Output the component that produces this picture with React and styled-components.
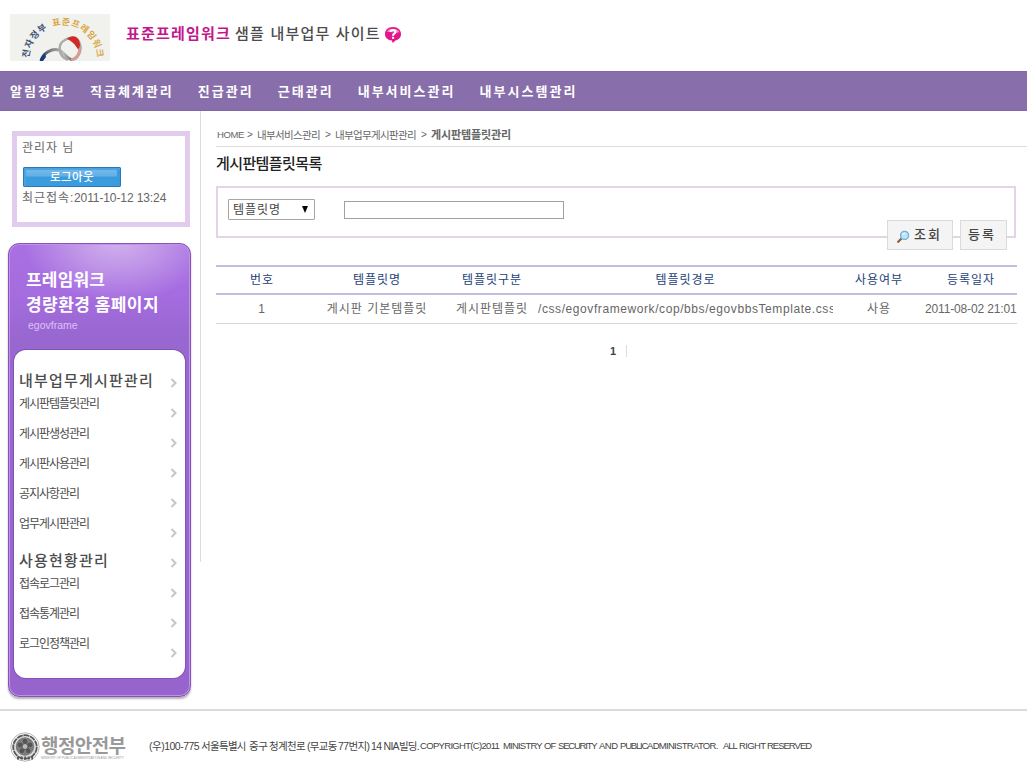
import React from "react";
import styled, { createGlobalStyle } from "styled-components";

const Global = createGlobalStyle`
  * { box-sizing: border-box; }
  body {
    margin: 0;
    background: #fff;
    color: #666;
    font: 12px/16px "Liberation Sans", "Noto Sans CJK KR", sans-serif;
    overflow: hidden;
  }
  ul { list-style: none; margin: 0; padding: 0; }
  h1, h2, p { margin: 0; font-weight: normal; }
`;

const Page = styled.div`
  width: 1027px;
  height: 777px;
  white-space: nowrap;
`;

/* Text with its own tracking */
const Txt = styled.span`
  display: inline-block;
  font-size: ${(p) => p.$size || 12}px;
  letter-spacing: ${(p) => p.$ls || 0}px;
  font-weight: ${(p) => p.$weight || 400};
  width: ${(p) => (p.$w ? p.$w + "px" : "auto")};
  color: ${(p) => p.$color || "inherit"};
`;

const Header = styled.header`
  height: 71px;
  display: flex;
  align-items: flex-start;
  padding: 14px 10px 0;
`;
const SiteTitle = styled.h1`
  display: flex;
  align-items: center;
  height: 20px;
  margin: 10px 0 0 16px;
  font-size: 15px;
  font-weight: 500;
  letter-spacing: 1.2px;
  color: #4c4c4c;
`;
const Brand = styled.span`
  color: #c4168c;
  font-weight: 700;
  margin-right: 4px;
`;

const Nav = styled.nav`
  height: 40px;
  background: #886eaa;
  border-top: 1px solid #8266a8;
  border-bottom: 1px solid #8266a8;
  display: flex;
  align-items: center;
  gap: 24px;
  padding: 1px 0 0 10px;
`;
const NavItem = styled.a`
  color: #fff;
  font-size: 13px;
  font-weight: 700;
  letter-spacing: 2.02px;
`;

const Body = styled.div`
  display: flex;
  height: 598px;
`;
const Side = styled.aside`
  width: 200px;
  padding: 20px 0 0 8px;
`;
const Divider = styled.div`
  width: 1px;
  height: 451px;
  background: #dcdcdc;
`;
const LoginBox = styled.section`
  width: 178px;
  height: 96px;
  margin-left: 4px;
  padding: 3px 0 0 5px;
  border: 5px solid #e2ccee;
`;
const Row = styled.p`
  height: 18px;
  line-height: 18px;
  display: flex;
`;
const Logout = styled.button`
  display: block;
  width: 98px;
  height: 20px;
  margin: 10px 0 2px 1px;
  padding: 0 0 2px;
  border: 1px solid #2b78bd;
  border-radius: 1px;
  background: linear-gradient(#7cbcec 0, #62afe6 45%, #3a9bdc 50%, #3b9ddd 100%);
  box-shadow: inset 2px 2px 1px #4aa2df, inset -3px 0 1px #3a9bdc;
  color: #fff;
  font: 500 11.5px/16px "Noto Sans CJK KR", sans-serif;
  letter-spacing: 0.4px;
`;

const Menu = styled.section`
  width: 183px;
  height: 454px;
  margin-top: 16px;
  padding: 0 5px 0 5px;
  border: 1px solid #8a50bc;
  border-radius: 11px;
  background: radial-gradient(ellipse 95px 62px at 60% -4px, #d2b2ee 0, #c096e8 45%, rgba(168, 112, 226, 0) 100%),
    linear-gradient(#a870e2 0, #a56ce0 50px, #9867cf 95px, #9664cc 100%);
  box-shadow: inset 0 0 0 1px #bd94e6, 0 2px 2px rgba(0, 0, 0, 0.3);
`;
const MenuHead = styled.div`
  height: 106px;
  padding: 22px 0 0 12px;
  color: #fff;
`;
const MenuTitle = styled.div`
  font: 700 17px/25px "Noto Sans CJK KR", sans-serif;
  letter-spacing: ${(p) => p.$ls}px;
`;
const MenuSub = styled.div`
  margin: 2px 0 0 2px;
  font-size: 10.5px;
  line-height: 15px;
  color: #dcc0f6;
`;
const MenuPanel = styled.ul`
  height: 328px;
  width: 171px;
  padding: 18px 8px 0 5px;
  border-radius: 12px;
  background: #fff;
  box-shadow: 0 0 0 1px #8650b8;
`;
const MenuItem = styled.li`
  height: 30px;
  display: flex;
  justify-content: space-between;
  align-items: center;
`;
const MenuLabel = styled.a`
  align-self: flex-start;
  margin-top: ${(p) => (p.$head ? 5 : -2)}px;
  font-size: ${(p) => (p.$head ? 15 : 12)}px;
  font-weight: ${(p) => (p.$head ? 500 : 400)};
  letter-spacing: ${(p) => (p.$head ? 1.2 : -1.04)}px;
  color: #4c4c4c;
`;

const Main = styled.main`
  flex: 1;
  padding: 16px 0 0 15px;
`;
const Crumbs = styled.div`
  display: flex;
  height: 20px;
  padding-left: 1px;
  border-bottom: 1px solid #dcdcdc;
  color: #666;
`;
const Heading = styled.h2`
  height: 39px;
  padding-top: 9px;
  font-size: 15px;
  font-weight: 500;
  letter-spacing: -0.6px;
  color: #222;
`;
const SearchBox = styled.section`
  position: relative;
  width: 800px;
  height: 52px;
  border: 2px solid #e2d3e6;
  display: flex;
  align-items: flex-start;
  padding: 11px 0 0 10px;
`;
const Select = styled.div`
  width: 87px;
  height: 21px;
  padding: 0 5px 0 4px;
  border: 1px solid #a6a6a6;
  border-radius: 1px;
  display: flex;
  align-items: center;
  justify-content: space-between;
  color: #444;
  letter-spacing: 0.96px;
`;
const Input = styled.input`
  width: 220px;
  height: 18px;
  margin: 2px 0 0 29px;
  border: 1px solid #a0a0a0;
`;
const Actions = styled.div`
  position: absolute;
  right: 7px;
  top: 32px;
  display: flex;
  gap: 7px;
`;
const Button = styled.button`
  width: ${(p) => p.$w}px;
  height: 30px;
  padding: 0 0 1px 7px;
  border: 1px solid #dadada;
  background: #f4f4f4;
  display: flex;
  align-items: center;
  color: #444;
  font: 500 13px/16px "Liberation Sans", "Noto Sans CJK KR", sans-serif;
  letter-spacing: 2px;
`;

const Table = styled.div`
  width: 801px;
  margin-top: 27px;
`;
const TableRow = styled.div`
  display: grid;
  grid-template-columns: 92px 138px 92px 295px 92px 92px;
  width: 801px;
  align-items: center;
  text-align: center;
  line-height: 26px;
  border: 0 solid #c6bce2;
  ${(p) =>
    p.$head
      ? "height:30px;border-width:2px 0;color:#1c3f78;letter-spacing:.96px;"
      : "height:29px;border-bottom:1px solid #d6d6d6;letter-spacing:.96px;"}
`;
const Cell = styled.div`
  overflow: hidden;
  text-align: ${(p) => (p.$left ? "left" : "center")};
  letter-spacing: ${(p) => (p.$ls === undefined ? "inherit" : p.$ls + "px")};
  font-size: ${(p) => p.$size || 12}px;
`;
const Pager = styled.div`
  display: flex;
  align-items: center;
  height: 12px;
  margin: 21px 0 0 394px;
  font-size: 11px;
  font-weight: 700;
  color: #444;
`;
const PagerRule = styled.span`
  width: 1px;
  height: 12px;
  margin-left: 10px;
  background: #ddd;
`;

const Footer = styled.footer`
  height: 68px;
  border-top: 2px solid #dcdcdc;
  display: flex;
  align-items: flex-start;
  padding: 21px 0 0 10px;
`;
const Ministry = styled.div`
  width: 109px;
  padding-left: 1px;
  color: #999;
`;
const MinistryName = styled.div`
  height: 24px;
  font: 700 19px/26px "Noto Sans CJK KR", sans-serif;
  letter-spacing: -0.6px;
`;
const MinistryEn = styled.div`
  height: 4px;
  font-size: 3.2px;
  line-height: 4px;
  letter-spacing: -0.05px;
`;
const Address = styled.p`
  display: flex;
  margin-top: 6px;
  color: #444;
`;

const Logo = () => (
  <svg width="100" height="47" viewBox="0 0 100 47">
    <defs>
      <path id="arc" d="M19 45 A34 34 0 0 1 87 45" />
      <linearGradient id="swoosh">
        <stop offset="0" stopColor="#173a78" />
        <stop offset=".25" stopColor="#777" />
        <stop offset=".7" stopColor="#bbb" />
        <stop offset="1" stopColor="#666" />
      </linearGradient>
    </defs>
    <rect width="100" height="47" fill="#f1f1ee" />
    <g fontFamily="Noto Sans CJK KR" fontSize="9" fontWeight="700">
      <text fill="#3d5275" letterSpacing="1">
        <textPath href="#arc" startOffset="1">전자정부</textPath>
      </text>
      <text fill="#d8a743" letterSpacing=".7">
        <textPath href="#arc" startOffset="43">표준프레임워크</textPath>
      </text>
    </g>
    <path d="M31 47 C33 39 42 34 49 36 C54 38 56 45 63 46" fill="none" stroke="url(#swoosh)" strokeWidth="3" />
    <path d="M30 47 C31 43 33 41 35 40 L36 43 L33 47Z" fill="#173a78" />
    <path d="M58 46 C48 42 47 30 55 26 C60 22 68 23 70 30 C72 37 68 46 61 46" fill="none" stroke="#aaa" strokeWidth="2.4" />
    <path d="M57 25 C62 20 70 22 70 31 L69 36 C66 34 66 29 57 25Z" fill="#cf2a24" />
    <path d="M70 34 C69 41 65 45 61 46" fill="none" stroke="#dc9a93" strokeWidth="2.4" />
  </svg>
);

const HelpIcon = () => (
  <svg width="18" height="18" viewBox="0 0 18 18" style={{ margin: "2px 0 0 3px" }}>
    <path d="M9 1 C14 1 17 4 17 8 C17 12 14 14 11.5 14.4 L8.8 17 L7.8 14.6 C4 14 1 12 1 8 C1 4 4 1 9 1Z" fill="#e3168b" />
    <path d="M2.5 6 C4 1.5 14 1.5 15.5 6 C12 8 6 5 2.5 6Z" fill="#f58ac6" />
    <path d="M6.4 6 C6.5 3.3 11.6 3.3 11.5 6 C11.4 7.8 9 7.6 9 9.7" fill="none" stroke="#fff" strokeWidth="2.1" />
    <rect x="8" y="10.8" width="2.1" height="2" fill="#fff" />
  </svg>
);

const Chevron = () => (
  <svg width="7" height="10" viewBox="0 0 7 10">
    <path d="M1.5 1 L5.5 5 L1.5 9" fill="none" stroke="#c6c6c6" strokeWidth="2" />
  </svg>
);

const Magnifier = () => (
  <svg width="14" height="14" viewBox="0 0 14 14" style={{ margin: "5px 4px 0 1px" }}>
    <path d="M1.5 12.5 L5.5 8.5" stroke="#96592f" strokeWidth="2.2" />
    <circle cx="8.6" cy="5.4" r="4" fill="#bce4f8" stroke="#6aaedb" strokeWidth="1.3" />
    <path d="M6.5 5 Q7 3.3 9 3.2" fill="none" stroke="#fff" />
  </svg>
);

const Emblem = () => (
  <svg width="30" height="30" viewBox="0 0 30 30">
    <circle cx="15" cy="15" r="14.2" fill="#fff" stroke="#aaa" strokeWidth=".9" />
    <circle cx="15" cy="15" r="11.8" fill="#ddd" stroke="#555" strokeWidth="1.8" strokeDasharray="6 .7" />
    <circle cx="15" cy="14.5" r="9.2" fill="#777" />
    {[0, 72, 144, 216, 288].map((a) => (
      <ellipse key={a} cx="15" cy="9.5" rx="3" ry="3.4" fill="#555" stroke="#999" strokeWidth=".7" transform={`rotate(${a} 15 14.5)`} />
    ))}
    <circle cx="15" cy="14.5" r="3" fill="#bbb" stroke="#555" />
    <path d="M7 26 H23" stroke="#555" strokeWidth="3" strokeDasharray="2 1.6" />
  </svg>
);

const navItems = ["알림정보", "직급체계관리", "진급관리", "근태관리", "내부서비스관리", "내부시스템관리"];
const menuItems = [
  ["내부업무게시판관리", true],
  ["게시판템플릿관리"],
  ["게시판생성관리"],
  ["게시판사용관리"],
  ["공지사항관리"],
  ["업무게시판관리"],
  ["사용현황관리", true],
  ["접속로그관리"],
  ["접속통계관리"],
  ["로그인정책관리"],
];
const columns = ["번호", "템플릿명", "템플릿구분", "템플릿경로", "사용여부", "등록일자"];
const copyright = [
  ["COPYRIGHT(C)2011", 83, -0.68],
  ["MINISTRY", 41, -0.8],
  ["OF", 14, -0.8],
  ["SECURITY", 41, -1.2],
  ["AND", 21, -0.5],
  ["PUBLIC", 27, -1.2],
  ["ADMINISTRATOR.", 76, -0.7],
  ["ALL", 16, -1],
  ["RIGHT", 28, -0.6],
  ["RESERVED", 46, -1],
];

export default function App() {
  return (
    <Page>
      <Global />
      <Header>
        <Logo />
        <SiteTitle>
          <Brand>표준프레임워크</Brand>샘플 내부업무 사이트
          <HelpIcon />
        </SiteTitle>
      </Header>
      <Nav>
        {navItems.map((n) => (
          <NavItem key={n}>{n}</NavItem>
        ))}
      </Nav>
      <Body>
        <Side>
          <LoginBox>
            <Row>
              <Txt $ls={0.96}>관리자 님</Txt>
            </Row>
            <Logout>로그아웃</Logout>
            <Row>
              <Txt $ls={0.96} $w={52}>최근접속:</Txt>
              <Txt $ls={-0.1}>2011-10-12 13:24</Txt>
            </Row>
          </LoginBox>
          <Menu>
            <MenuHead>
              <MenuTitle $ls={0.2}>프레임워크</MenuTitle>
              <MenuTitle $ls={0.45}>경량환경 홈페이지</MenuTitle>
              <MenuSub>egovframe</MenuSub>
            </MenuHead>
            <MenuPanel>
              {menuItems.map(([label, head]) => (
                <MenuItem key={label}>
                  <MenuLabel $head={head}>{label}</MenuLabel>
                  <Chevron />
                </MenuItem>
              ))}
            </MenuPanel>
          </Menu>
        </Side>
        <Divider />
        <Main>
          <Crumbs>
            <Txt $size={9.5} $ls={-0.4} $w={30}>HOME</Txt>
            <Txt $size={10} $w={10}>&gt;</Txt>
            <Txt $size={10.5} $ls={-0.66} $w={68}>내부서비스관리</Txt>
            <Txt $size={10} $w={10}>&gt;</Txt>
            <Txt $size={10.5} $ls={-0.66} $w={86}>내부업무게시판관리</Txt>
            <Txt $size={10} $w={10}>&gt;</Txt>
            <Txt $size={11} $ls={-0.12} $weight={700}>게시판템플릿관리</Txt>
          </Crumbs>
          <Heading>게시판템플릿목록</Heading>
          <SearchBox>
            <Select>
              템플릿명
              <svg width="8" height="7" viewBox="0 0 8 7">
                <path d="M1 0 H7 L4 7Z" fill="#000" />
              </svg>
            </Select>
            <Input />
            <Actions>
              <Button $w={66}>
                <Magnifier />
                조회
              </Button>
              <Button $w={47}>등록</Button>
            </Actions>
          </SearchBox>
          <Table>
            <TableRow $head>
              {columns.map((c) => (
                <Cell key={c}>{c}</Cell>
              ))}
            </TableRow>
            <TableRow>
              <Cell>1</Cell>
              <Cell>게시판 기본템플릿</Cell>
              <Cell>게시판템플릿</Cell>
              <Cell $left $ls={0.58}>/css/egovframework/cop/bbs/egovbbsTemplate.css</Cell>
              <Cell>사용</Cell>
              <Cell $left $ls={-0.15}>2011-08-02 21:01</Cell>
            </TableRow>
          </Table>
          <Pager>
            1<PagerRule />
          </Pager>
        </Main>
      </Body>
      <Footer>
        <Emblem />
        <Ministry>
          <MinistryName>행정안전부</MinistryName>
          <MinistryEn>MINISTRY OF PUBLIC ADMINISTRATION AND SECURITY</MinistryEn>
        </Ministry>
        <Address>
          <Txt $size={10.5} $ls={-0.5} $w={52}>(우)100-775</Txt>
          <Txt $size={10.5} $ls={-0.7} $w={48}>서울특별시</Txt>
          <Txt $size={10.5} $ls={-0.5} $w={20}>중구</Txt>
          <Txt $size={10.5} $ls={-0.7} $w={38}>청계천로</Txt>
          <Txt $size={10.5} $ls={-0.7} $w={31}>(무교동</Txt>
          <Txt $size={10.5} $ls={-0.6} $w={33}>77번지)</Txt>
          <Txt $size={10.5} $ls={-0.7} $w={49}>14 NIA빌딩.</Txt>
          {copyright.map(([word, w, ls]) => (
            <Txt key={word} $size={9.5} $ls={ls} $w={w}>{word}</Txt>
          ))}
        </Address>
      </Footer>
    </Page>
  );
}
